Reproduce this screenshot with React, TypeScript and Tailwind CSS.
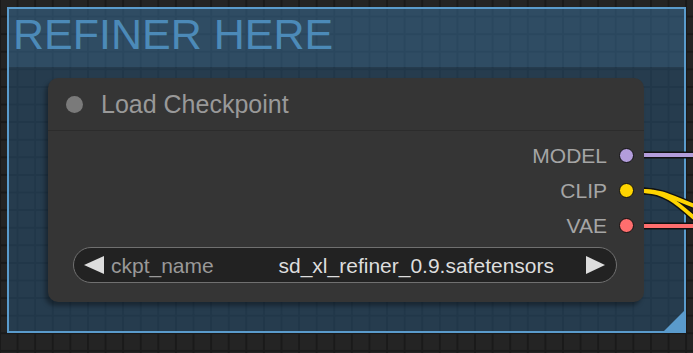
const font = 'font-["Liberation_Sans",Arial,sans-serif]';

const outputs = [
  { name: 'MODEL', color: 'bg-[#b39ddb]' },
  { name: 'CLIP', color: 'bg-[#ffd500]' },
  { name: 'VAE', color: 'bg-[#ff6e6e]' },
];

function Links() {
  return (
    <svg className="absolute left-0 top-0 z-10 pointer-events-none" width={693} height={353}>
      {/* dark outlines */}
      <g stroke="#111" strokeWidth={7} fill="none" strokeLinecap="round">
        <path d="M644 155 L700 155" />
        <path d="M644 191 C664 191 674 199 700 208" />
        <path d="M644 191 C668 192 680 206 700 223" />
        <path d="M644 226 L700 226" />
      </g>
      <g strokeWidth={4} fill="none">
        <path d="M644 155 L700 155" stroke="#b39ddb" />
        <path d="M644 191 C664 191 674 199 700 208" stroke="#ffd500" />
        <path d="M644 191 C668 192 680 206 700 223" stroke="#ffd500" />
        <path d="M644 226 L700 226" stroke="#ff6e6e" />
      </g>
    </svg>
  );
}

function Arrow({ dir }: { dir: 'left' | 'right' }) {
  return (
    <svg width={20} height={18} viewBox="0 0 20 18" className="shrink-0">
      <polygon points={dir === 'left' ? '20,0 20,18 0,9' : '0,0 0,18 19,9'} fill="#dddddd" />
    </svg>
  );
}

function Node() {
  return (
    <div className="relative z-20 w-[596px] h-[224px] rounded-[10px] bg-[#353535] shadow-[-3px_4px_4px_rgba(0,0,0,0.35)]">
      <div className="flex items-center h-[53px] border-b border-[#2c2c2c] pl-[18px]">
        <div className="w-[17px] h-[17px] rounded-full bg-[#7a7a7a]" />
        <span className="ml-[18px] text-[25px] text-[#999999] leading-none">Load Checkpoint</span>
      </div>
      <div className="pt-[7px]">
        {outputs.map((o) => (
          <div key={o.name} className="flex items-center justify-end h-[35px] pr-[10px]">
            <span className="text-[21px] text-[#a5a5a5] leading-none">{o.name}</span>
            <div className={`ml-[12px] w-[15px] h-[15px] rounded-full border-[1.5px] border-[#111] ${o.color}`} />
          </div>
        ))}
      </div>
      <div className="mt-[4px] ml-[25px] w-[544px] h-[36px] rounded-full border border-[#707070] bg-[#222222] flex items-center pl-[10px] pr-[10px]">
        <Arrow dir="left" />
        <span className="ml-[7px] text-[21px] text-[#999999] leading-none">ckpt_name</span>
        <span className="flex-1" />
        <span className="mr-[32px] text-[21px] text-[#dddddd] leading-none">sd_xl_refiner_0.9.safetensors</span>
        <Arrow dir="right" />
      </div>
    </div>
  );
}

export default function App() {
  return (
    <div
      className={`relative w-[693px] h-[353px] overflow-hidden bg-[#242424] bg-[linear-gradient(#1a1a1a_2px,transparent_2px),linear-gradient(90deg,#1a1a1a_2px,transparent_2px)] bg-[size:17.6px_17.6px] bg-[position:-1px_-2px] pl-[7px] pt-[7px] ${font}`}
    >
      <div className="relative w-[679px] h-[326px] border-2 border-[#5a9bcc] flex flex-col">
        <div className="h-[58px] bg-[rgba(56,110,152,0.55)] flex items-center pl-[4px]">
          <span className="text-[43px] text-[#4c8ab8] leading-none mt-[-8px]">REFINER HERE</span>
        </div>
        <div className="flex-1 bg-[rgba(42,92,130,0.45)] pl-[39px] pt-[11px]">
          <Node />
        </div>
        <div className="absolute right-0 bottom-0 w-0 h-0 border-l-[20px] border-l-transparent border-b-[20px] border-b-[#5a9bcc]" />
      </div>
      <Links />
    </div>
  );
}
